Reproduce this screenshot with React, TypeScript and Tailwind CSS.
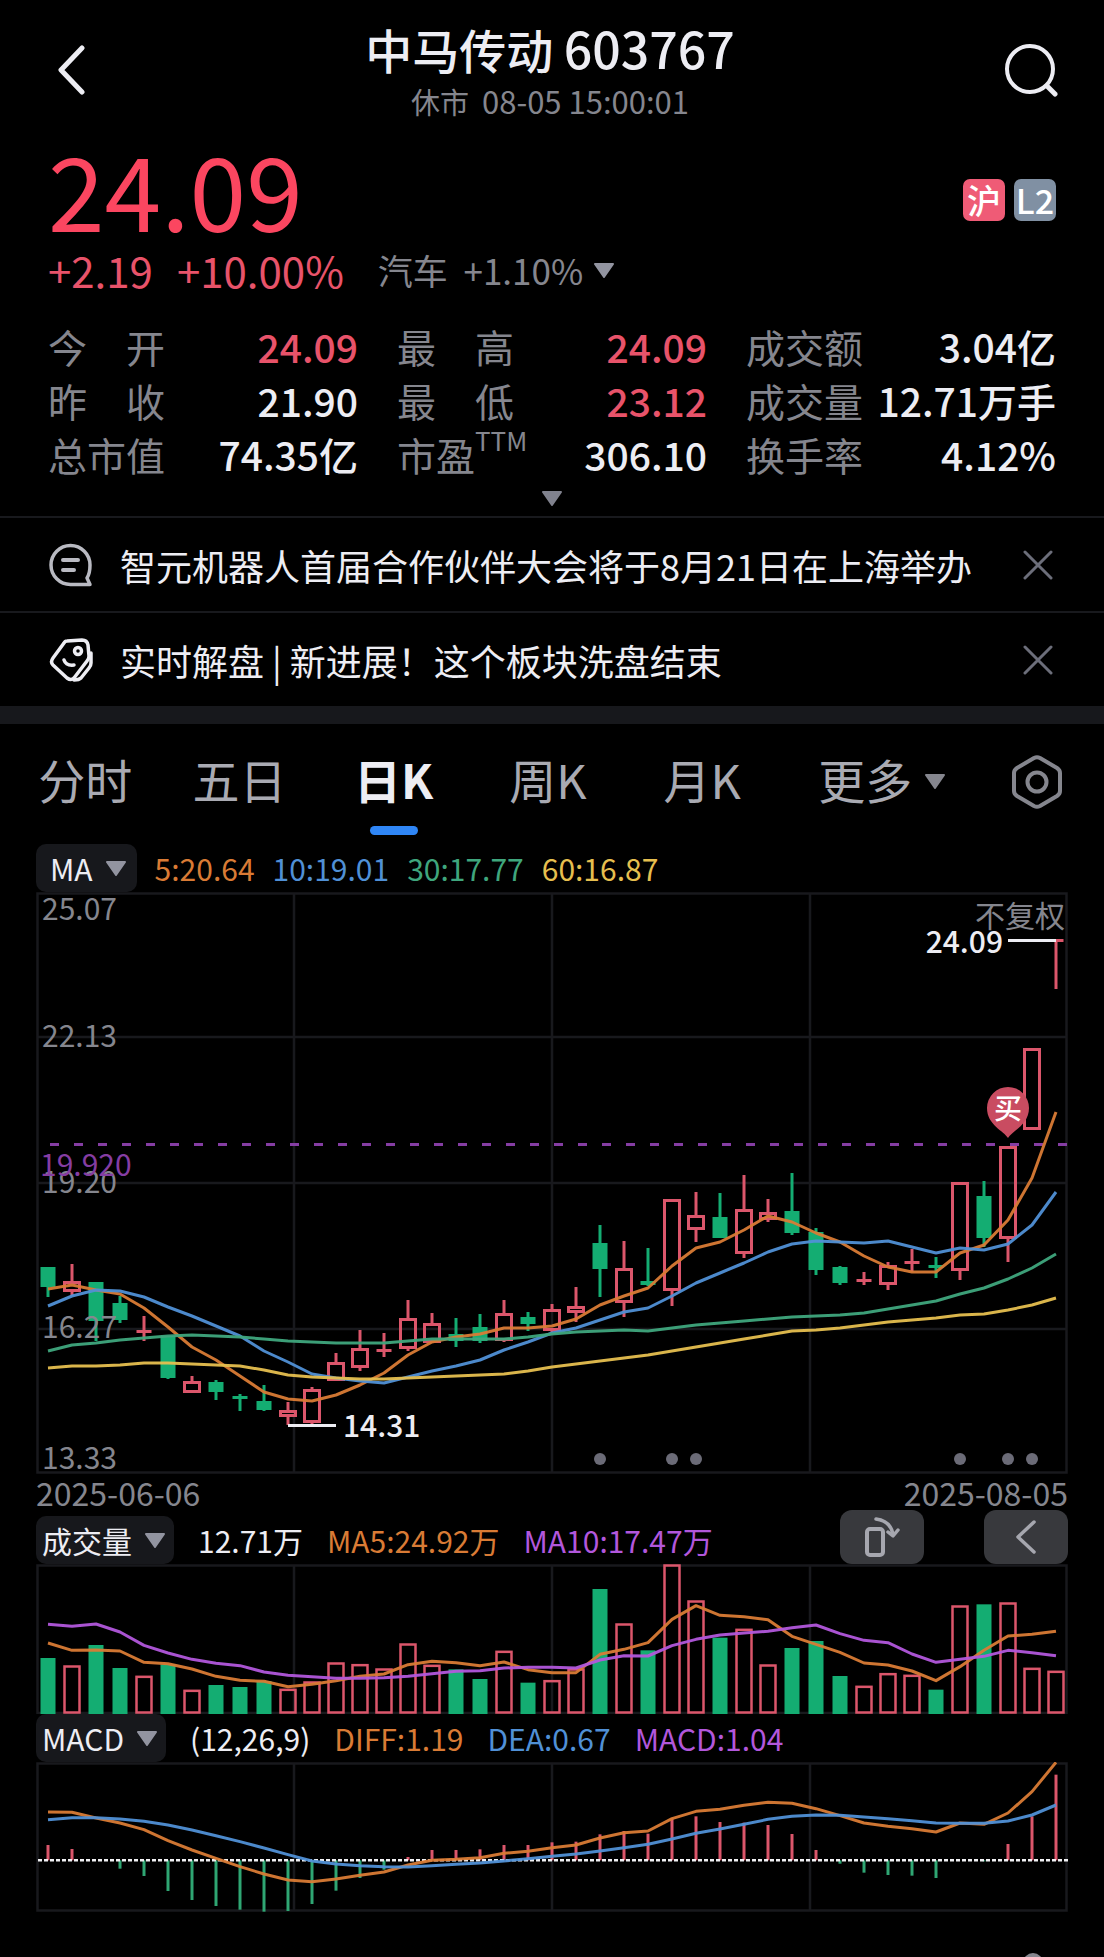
import { useState } from "react";

type Candle = [up: 0 | 1, top: number, bottom: number, high: number, low: number];

const STEP = 24;
const FIRST_X = 48;
const xAt = (i: number) => FIRST_X + i * STEP;

/* Vertical values are canvas units of the price plot. */
const candles: Candle[] = [
  [0, 1268, 1288, 1268, 1298], [1, 1282, 1293, 1265, 1297], [0, 1283, 1322, 1283, 1342], [0, 1304, 1321, 1297, 1324],
  [1, 1331, 1334, 1317, 1342], [0, 1337, 1379, 1337, 1380], [1, 1382, 1394, 1377, 1394], [0, 1383, 1393, 1381, 1401],
  [0, 1397, 1400, 1395, 1412], [0, 1402, 1411, 1386, 1412], [1, 1411, 1418, 1403, 1426], [1, 1390, 1424, 1388, 1426],
  [1, 1363, 1382, 1354, 1382], [1, 1349, 1369, 1331, 1372], [1, 1350, 1353, 1334, 1358], [1, 1319, 1350, 1301, 1352],
  [1, 1324, 1344, 1314, 1344], [0, 1335, 1342, 1319, 1348], [0, 1328, 1342, 1315, 1344], [1, 1314, 1342, 1301, 1343],
  [0, 1318, 1325, 1313, 1332], [1, 1310, 1332, 1305, 1333], [1, 1307, 1314, 1288, 1323], [0, 1244, 1270, 1226, 1298],
  [1, 1269, 1304, 1242, 1318], [0, 1282, 1286, 1249, 1287], [1, 1200, 1292, 1200, 1307], [1, 1216, 1231, 1193, 1243],
  [0, 1218, 1239, 1194, 1239], [1, 1210, 1255, 1176, 1259], [1, 1213, 1221, 1200, 1223], [0, 1212, 1234, 1174, 1236],
  [0, 1233, 1271, 1229, 1276], [0, 1268, 1284, 1267, 1286], [1, 1280, 1283, 1273, 1286], [1, 1266, 1286, 1263, 1291],
  [1, 1262, 1265, 1250, 1273], [0, 1266, 1269, 1258, 1279], [1, 1183, 1272, 1183, 1281], [0, 1197, 1239, 1182, 1248],
  [1, 1147, 1240, 1147, 1263], [1, 1049, 1131, 1049, 1131], [1, 940, 943, 940, 990],
];

const ma5 = [1290, 1286, 1291, 1295, 1309, 1328, 1348, 1361, 1377, 1393, 1400, 1402, 1396, 1386, 1374, 1356, 1343, 1338, 1335, 1329, 1329, 1327, 1320, 1306, 1297, 1289, 1267, 1249, 1243, 1231, 1217, 1223, 1234, 1243, 1257, 1268, 1273, 1273, 1254, 1246, 1221, 1179, 1113];
const ma10 = [1307, 1297, 1291, 1292, 1298, 1308, 1317, 1327, 1337, 1352, 1363, 1375, 1379, 1382, 1384, 1378, 1372, 1367, 1361, 1351, 1343, 1334, 1329, 1321, 1313, 1309, 1297, 1284, 1274, 1264, 1253, 1245, 1242, 1243, 1244, 1242, 1248, 1254, 1249, 1251, 1245, 1226, 1193];
const ma30 = [1352, 1346, 1344, 1341, 1339, 1337, 1336, 1337, 1338, 1340, 1342, 1343, 1344, 1344, 1344, 1342, 1340, 1340, 1340, 1340, 1338, 1335, 1333, 1332, 1331, 1332, 1329, 1326, 1324, 1322, 1320, 1318, 1317, 1316, 1314, 1310, 1306, 1302, 1295, 1289, 1280, 1269, 1255];
const ma60 = [1369, 1367, 1367, 1366, 1364, 1364, 1365, 1366, 1367, 1371, 1376, 1378, 1379, 1380, 1380, 1379, 1378, 1377, 1376, 1375, 1372, 1368, 1365, 1362, 1359, 1356, 1352, 1348, 1344, 1340, 1336, 1332, 1331, 1329, 1326, 1323, 1321, 1319, 1316, 1315, 1311, 1306, 1299];

/* The two lower plots keep their values in thirds of a canvas unit. */
const third = (v: number) => v / 3;
const volumeUp = [0, 1, 0, 0, 1, 0, 1, 0, 0, 0, 1, 1, 1, 1, 1, 1, 1, 0, 0, 1, 0, 1, 1, 0, 1, 0, 1, 1, 0, 1, 1, 0, 0, 0, 1, 1, 1, 0, 1, 0, 1, 1, 1];
const volumeTop = [537, 558, 498, 567, 589, 556, 631, 618, 624, 606, 628, 606, 549, 554, 567, 492, 556, 571, 600, 514, 611, 602, 567, 330, 432, 514, 255, 363, 476, 448, 555, 507, 486, 591, 619, 581, 586, 632, 378, 376, 369, 565, 574];
const volMa5 = [492, 514, 513, 516, 550, 554, 570, 592, 604, 607, 623, 616, 605, 592, 585, 557, 547, 551, 560, 549, 572, 581, 581, 526, 511, 491, 421, 380, 409, 413, 422, 472, 496, 520, 552, 558, 576, 605, 563, 514, 471, 466, 457].map(third);
const volMa10 = [436, 442, 435, 459, 499, 522, 541, 553, 560, 579, 589, 593, 598, 598, 596, 592, 584, 577, 575, 567, 565, 565, 567, 543, 530, 531, 500, 481, 468, 462, 457, 446, 438, 464, 484, 491, 525, 550, 541, 532, 514, 521, 530].map(third);
const ZERO = 454;
const histogram = [408, 420, 454, 479, 501, 546, 573, 591, 602, 608, 606, 585, 545, 507, 482, 444, 423, 423, 421, 408, 408, 400, 398, 376, 366, 374, 328, 322, 339, 341, 348, 375, 423, 464, 491, 498, 500, 507, 454, 457, 405, 322, 197];
const diff = [309, 310, 327, 342, 362, 395, 423, 448, 473, 495, 513, 518, 510, 499, 489, 468, 454, 451, 446, 433, 427, 416, 408, 387, 371, 366, 329, 307, 301, 289, 280, 283, 299, 320, 342, 352, 359, 369, 342, 346, 312, 248, 160].map(third);
const dea = [332, 326, 326, 330, 337, 348, 363, 380, 398, 417, 437, 456, 465, 470, 473, 474, 470, 466, 462, 456, 449, 442, 435, 426, 416, 406, 390, 373, 360, 346, 331, 322, 318, 319, 324, 329, 335, 342, 343, 343, 336, 318, 288].map(third);

const RED = "#db566b";
const GREEN = "#14ad72";
const ORANGE = "#d97b35";
const BLUE = "#5090d6";
const PURPLE = "#b257dc";
const YELLOW = "#e6bf4f";
const GRID = "#18191d";

function Line({ values, color }: { values: number[]; color: string }) {
  return (
    <polyline
      points={values.map((v, i) => `${xAt(i)},${v}`).join(" ")}
      fill="none"
      stroke={color}
      strokeWidth="3"
      strokeLinejoin="round"
      opacity="0.95"
    />
  );
}

function Frame({ top, bottom, rows = [] }: { top: number; bottom: number; rows?: number[] }) {
  return (
    <g stroke={GRID} strokeWidth="2.5" fill="none">
      <rect x="37.5" y={top} width="1029" height={bottom - top} />
      {[294, 552, 810].map((x) => (
        <line key={x} x1={x} x2={x} y1={top} y2={bottom} />
      ))}
      {rows.map((y) => (
        <line key={y} x1="37.5" x2="1066.5" y1={y} y2={y} />
      ))}
    </g>
  );
}

function PriceChart() {
  return (
    <svg viewBox="36 893 1032 582" className="block w-full overflow-visible" role="img" aria-label="日K线图">
      <Frame top={894.5} bottom={1473.5} rows={[1038, 1184, 1330]} />
      <line x1="50" x2="1067" y1="1145.5" y2="1145.5" stroke="#853da3" strokeWidth="3" strokeDasharray="9 15" />
      {candles.map(([up, top, bottom, high, low], i) => {
        const x = xAt(i);
        const color = up ? RED : GREEN;
        const thin = bottom - top <= 4;
        return (
          <g key={i}>
            {high < top && <line x1={x} x2={x} y1={high} y2={top} stroke={color} strokeWidth="3" />}
            {low > bottom && <line x1={x} x2={x} y1={bottom} y2={low} stroke={color} strokeWidth="3" />}
            {up && !thin ? (
              <rect x={x - 7.5} y={top + 1.5} width="15" height={bottom - top - 3} fill="none" stroke={color} strokeWidth="3" />
            ) : (
              <rect x={x - 7.5} y={top} width="15" height={bottom - top} fill={color} />
            )}
          </g>
        );
      })}
      <Line values={ma5} color={ORANGE} />
      <Line values={ma10} color={BLUE} />
      <Line values={ma30} color="#3fa67d" />
      <Line values={ma60} color={YELLOW} />
      {[23, 26, 27, 38, 40, 41].map((i) => (
        <circle key={i} cx={xAt(i)} cy="1460" r="6" fill="#6b6b77" />
      ))}
      <g className="fill-[#85868e] text-[30px]">
        <text x="42" y="921">25.07</text>
        <text x="42" y="1048">22.13</text>
        <text x="42" y="1194">19.20</text>
        <text x="42" y="1339">16.27</text>
        <text x="42" y="1470">13.33</text>
        <text x="1065" y="928" textAnchor="end">不复权</text>
      </g>
      <text x="40" y="1177" className="fill-[#853da3] text-[30px]">19.920</text>
      <g className="fill-[#ededf3] text-[30px] font-medium">
        <text x="1003" y="954" textAnchor="end">24.09</text>
        <text x="343" y="1438">14.31</text>
      </g>
      <line x1="1008" x2="1056" y1="941.5" y2="941.5" stroke="#ededf3" strokeWidth="3" />
      <line x1="288" x2="336" y1="1426.5" y2="1426.5" stroke="#ededf3" strokeWidth="3" />
      <path d="M1008 1139C1004 1132 987 1126 987 1109A21 21 0 0 1 1029 1109C1029 1126 1012 1132 1008 1139Z" fill="#c94c61" />
      <text x="1008" y="1120" textAnchor="middle" className="fill-white text-[28px] font-medium">买</text>
    </svg>
  );
}

function VolumeChart() {
  return (
    <svg viewBox="36 85 1032 150" className="block w-full" role="img" aria-label="成交量图">
      <Frame top={86.5} bottom={234} />
      {volumeTop.map((v, i) =>
        volumeUp[i] ? (
          <rect key={i} x={xAt(i) - 7.5} y={third(v) + 1.5} width="15" height={233.5 - third(v) - 1.5} fill="none" stroke={RED} strokeWidth="2.5" />
        ) : (
          <rect key={i} x={xAt(i) - 7.5} y={third(v)} width="15" height={235 - third(v)} fill={GREEN} />
        ),
      )}
      <Line values={volMa5} color={ORANGE} />
      <Line values={volMa10} color={PURPLE} />
    </svg>
  );
}

function MacdChart() {
  return (
    <svg viewBox="36 53 1032 150" className="block w-full" role="img" aria-label="MACD图">
      <Frame top={54.5} bottom={201.5} />
      {histogram.map((v, i) => (
        <line key={i} x1={xAt(i)} x2={xAt(i)} y1={third(ZERO)} y2={third(v)} stroke={v < ZERO ? RED : "#2fa673"} strokeWidth="3" />
      ))}
      <line x1="38" x2="1068" y1="151.3" y2="151.3" stroke="#f1f1f4" strokeWidth="2.4" strokeDasharray="4 2" />
      <Line values={diff} color={ORANGE} />
      <Line values={dea} color={BLUE} />
    </svg>
  );
}

function Caret({ className }: { className: string }) {
  return (
    <svg viewBox="0 0 22 15" className={className} aria-hidden="true">
      <path d="M2 1H20L11 14Z" fill="currentColor" stroke="currentColor" strokeWidth="2" strokeLinejoin="round" />
    </svg>
  );
}

function Pill({ label }: { label: string }) {
  return (
    <button type="button" className="flex h-12 items-center gap-3 rounded-[10px] bg-[#17181c] pr-2 pl-1.5 text-[#ededf3]">
      {label}
      <Caret className="h-[15px] w-[22px] text-[#9294a0]" />
    </button>
  );
}

const stats = [
  ["今　开", "24.09", true], ["最　高", "24.09", true], ["成交额", "3.04亿", false],
  ["昨　收", "21.90", false], ["最　低", "23.12", true], ["成交量", "12.71万手", false],
  ["总市值", "74.35亿", false], ["市盈", "306.10", false], ["换手率", "4.12%", false],
] as const;

const tabs = ["分时", "五日", "日K", "周K", "月K"];

function CloseIcon() {
  return (
    <svg viewBox="0 0 30 30" className="size-[30px]" aria-hidden="true">
      <path d="M2 2L28 28M28 2L2 28" stroke="#6c6e7a" strokeWidth="3" strokeLinecap="round" />
    </svg>
  );
}

function NoticeIcon() {
  return (
    <svg viewBox="0 0 44 44" className="size-11 shrink-0" fill="none" stroke="#b9bac2" strokeWidth="3.500" strokeLinecap="round" strokeLinejoin="round" aria-hidden="true">
      <path d="M41 41.500H21.500A19.500 19.500 0 1 1 41 22C41 28 40 32 38 35Z" />
      <path d="M14 17H29M14 27H25" strokeWidth="4" />
    </svg>
  );
}

function TagIcon() {
  return (
    <svg viewBox="0 0 44 44" className="size-11 shrink-0" fill="none" stroke="#ededf3" strokeWidth="3.500" strokeLinecap="round" strokeLinejoin="round" aria-hidden="true">
      <path d="M18 3L33 2Q38 2 39 7L40 18Q40 21 38 23L25 40Q22 43 18 40L4 27Q1 24 4 20L15 5Q16 3 18 3Z" />
      <path d="M42 15V25Q42 28 40 30L32 40Q30 42 25 42" />
      <circle cx="29" cy="13" r="3.500" />
      <path d="M15 22Q17 28 25 27" />
    </svg>
  );
}

export default function App() {
  const [active, setActive] = useState("日K");
  const [notices, setNotices] = useState([
    { id: "news", text: "智元机器人首届合作伙伴大会将于8月21日在上海举办" },
    { id: "live", text: "实时解盘 | 新进展！这个板块洗盘结束" },
  ]);

  return (
    <div className="min-h-screen bg-black font-['Noto_Sans_CJK_SC',sans-serif] text-[#ededf3]">
      <header className="flex items-center justify-between px-11 pt-[19px]">
        <button type="button" aria-label="返回" className="flex w-[54px] justify-center">
          <svg viewBox="0 0 30 50" className="h-[50px] w-[30px]" aria-hidden="true">
            <path d="M26 3L5 25L26 47" fill="none" stroke="#ededf3" strokeWidth="5" strokeLinecap="round" strokeLinejoin="round" />
          </svg>
        </button>
        <div className="text-center">
          <h1 className="text-[47px] leading-[56px] font-medium">
            中马传动 <span className="text-[50px]">603767</span>
          </h1>
          <p className="mt-1 text-[29px] leading-10 text-[#85868e]">
            休市&nbsp; <span className="text-[31px]">08-05 15:00:01</span>
          </p>
        </div>
        <button type="button" aria-label="搜索" className="flex w-[58px] justify-center">
          <svg viewBox="0 0 54 54" className="size-[54px]" fill="none" stroke="#ededf3" strokeWidth="4" strokeLinecap="round" aria-hidden="true">
            <circle cx="26" cy="26" r="23" />
            <path d="M43 43L51 51" strokeWidth="5" />
          </svg>
        </button>
      </header>

      <section className="px-12">
        <div className="mt-[17px] flex items-center justify-between">
          <strong className="text-[102px] leading-[100px] font-normal text-[#fb4660]">24.09</strong>
          <div className="mt-6 flex gap-[9px] text-[34px] leading-none font-medium text-white">
            <span className="flex size-[42px] items-center justify-center rounded-[7px] bg-[#ef5b76]">沪</span>
            <span className="flex size-[42px] items-center justify-center rounded-[7px] bg-[#8090a3]">L2</span>
          </div>
        </div>
        <div className="mt-1.5 flex items-center text-[42px] leading-[52px] text-[#e8536a]">
          <span>+2.19</span>
          <span className="ml-6">+10.00%</span>
          <button type="button" className="ml-[34px] flex items-center text-[35px] text-[#85868e]">
            汽车&nbsp; +1.10%
            <Caret className="ml-2.5 h-[15px] w-[22px] text-[#9294a0]" />
          </button>
        </div>
        <dl className="mt-[23px] grid grid-cols-3 gap-x-[39px] text-[39px] leading-[54px]">
          {stats.map(([label, value, red]) => (
            <div key={label} className="flex justify-between whitespace-nowrap">
              <dt className="flex text-[#85868e]">
                {label}
                {label === "市盈" && <span className="text-[26px] leading-[26px]">TTM</span>}
              </dt>
              <dd className={red ? "font-medium text-[#e8536a]" : "font-medium"}>{value}</dd>
            </div>
          ))}
        </dl>
        <button type="button" aria-label="展开" className="mx-auto flex h-[35px] items-center">
          <Caret className="h-[15px] w-[22px] text-[#80828e]" />
        </button>
      </section>

      <ul>
        {notices.map(({ id, text }) => (
          <li key={id} className="flex h-[95px] items-center border-t-2 border-[#18191d] pr-[51px] pl-[49px] text-[36px]">
            {id === "news" ? <NoticeIcon /> : <TagIcon />}
            <a href="#notice" className="ml-[27px] min-w-0 flex-1 truncate">
              {text}
            </a>
            <button type="button" aria-label="关闭" onClick={() => setNotices((all) => all.filter((n) => n.id !== id))}>
              <CloseIcon />
            </button>
          </li>
        ))}
      </ul>
      <div className="h-[18px] bg-[#17181c]" />

      <nav className="grid grid-cols-[3fr_3fr_3fr_3fr_3fr_4fr_2fr] pr-4 pl-2 text-[47px] leading-[56px] text-[#a9aab2]">
        {tabs.map((tab) => (
          <button
            key={tab}
            type="button"
            onClick={() => setActive(tab)}
            className={
              active === tab
                ? "flex h-[120px] flex-col items-center pt-[27px] font-bold text-[#ededf3]"
                : "flex h-[120px] flex-col items-center pt-[27px]"
            }
          >
            {tab}
            {active === tab && <span className="mt-[19px] h-[9px] w-12 rounded-full bg-[#2f86f6]" />}
          </button>
        ))}
        <button type="button" className="flex h-[120px] justify-center pt-[27px]">
          更多
          <Caret className="mt-[23px] ml-3 h-[15px] w-[22px] text-[#85868e]" />
        </button>
        <button type="button" aria-label="设置" className="flex h-[120px] justify-center pt-[31px]">
          <svg viewBox="0 0 52 54" className="h-[54px] w-[52px]" fill="none" stroke="#85868e" strokeWidth="4" strokeLinejoin="round" aria-hidden="true">
            <path d="M23 3Q26 1.500 29 3L46 13Q49 15 49 18V36Q49 39 46 41L29 51Q26 52.500 23 51L6 41Q3 39 3 36V18Q3 15 6 13Z" />
            <circle cx="26" cy="27" r="9.500" />
          </svg>
        </button>
      </nav>

      <main className="px-9 text-[30px] leading-9 whitespace-nowrap">
        <div className="flex items-center gap-[18px]">
          <button type="button" className="flex h-12 items-center gap-3 rounded-[10px] bg-[#17181c] pr-2.5 pl-3.5">
            MA
            <Caret className="h-[15px] w-[22px] text-[#9294a0]" />
          </button>
          <span className="text-[#d97b35]">5:20.64</span>
          <span className="text-[#5090d6]">10:19.01</span>
          <span className="text-[#3fa67d]">30:17.77</span>
          <span className="text-[#e6bf4f]">60:16.87</span>
        </div>
        <PriceChart />
        <div className="flex justify-between text-[32px] text-[#85868e]">
          <time>2025-06-06</time>
          <time>2025-08-05</time>
        </div>
        <div className="flex h-[54px] items-end gap-6">
          <Pill label="成交量" />
          <span className="leading-12">12.71万</span>
          <span className="leading-12 text-[#d97b35]">MA5:24.92万</span>
          <span className="leading-12 text-[#b257dc]">MA10:17.47万</span>
          <div className="ml-auto flex gap-[60px]">
            <button type="button" aria-label="横屏" className="flex h-[54px] w-[84px] items-center justify-center rounded-xl bg-[#38393d]">
              <svg viewBox="0 0 36 42" className="h-[42px] w-9" fill="none" stroke="#a6a7af" strokeWidth="4" strokeLinecap="round" strokeLinejoin="round" aria-hidden="true">
                <rect x="3" y="13" width="16" height="26" rx="3" />
                <path d="M12 3Q27 5 29 19M24 16L29 20L34 14" strokeWidth="3.500" />
              </svg>
            </button>
            <button type="button" aria-label="收起" className="flex h-[54px] w-[84px] items-center justify-center rounded-xl bg-[#38393d]">
              <svg viewBox="0 0 22 36" className="h-9 w-[22px]" fill="none" stroke="#a6a7af" strokeWidth="3.500" strokeLinecap="round" strokeLinejoin="round" aria-hidden="true">
                <path d="M19 3L3 18L19 33" />
              </svg>
            </button>
          </div>
        </div>
        <VolumeChart />
        <div className="flex items-center gap-6">
          <Pill label="MACD" />
          <span>(12,26,9)</span>
          <span className="text-[#d97b35]">DIFF:1.19</span>
          <span className="text-[#5090d6]">DEA:0.67</span>
          <span className="text-[#b257dc]">MACD:1.04</span>
        </div>
        <MacdChart />
        <div className="flex h-[45px] items-end justify-end pr-[25px]">
          <svg viewBox="0 0 20 4" className="h-1 w-5" aria-hidden="true">
            <circle cx="10" cy="10" r="10" fill="#85868e" />
          </svg>
        </div>
      </main>
    </div>
  );
}
